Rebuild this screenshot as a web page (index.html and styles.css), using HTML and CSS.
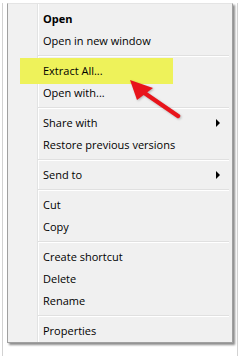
FILE: index.html
```html
<!DOCTYPE html>
<html>
  <head>
    <meta charset="UTF-8">
    <title>Context menu</title>
    <link rel="stylesheet" href="styles.css">
  </head>
  <body>
    <div class="frame">
      <div class="menu">
        <!-- annotation: highlight + arrow -->
        <div class="highlight"></div>
        <svg class="pointer" width="62" height="50" viewBox="0 0 62 50">
          <line x1="18" y1="17" x2="53" y2="41" stroke="#e8141b" stroke-width="4.5" stroke-linecap="round"/>
          <polygon points="5,5 28,13 12,25" fill="#e8141b"/>
        </svg>

        <div class="item bold">Open</div>
        <div class="item">Open in new window</div>
        <div class="sep"></div>
        <div class="item">Extract All...</div>
        <div class="item">Open with...</div>
        <div class="sep"></div>
        <div class="item sub">Share with</div>
        <div class="item">Restore previous versions</div>
        <div class="sep"></div>
        <div class="item sub">Send to</div>
        <div class="sep"></div>
        <div class="item">Cut</div>
        <div class="item">Copy</div>
        <div class="sep"></div>
        <div class="item">Create shortcut</div>
        <div class="item">Delete</div>
        <div class="item">Rename</div>
        <div class="sep"></div>
        <div class="item">Properties</div>
      </div>
    </div>
  </body>
</html>
```
FILE: styles.css
```css
/* reset */
html,body{margin:0;padding:0;background:#fff;}
body{font-family:'Open Sans','Noto Sans',sans-serif;font-size:11px;color:#000;}

/* screenshot frame */
.frame{margin:0 2px;height:354px;box-sizing:border-box;border:1px solid #d2d2d2;border-top:none;padding:0 0 0 4px;}

/* menu box with icon gutter */
.menu{position:relative;width:224px;margin-top:3px;border:1px solid #a0a0a0;border-top-color:#e4e4e4;padding:4px 0 0 0;
  background:linear-gradient(to right,#f1f1f1 0 29px,#e2e3e3 29px 30px,#fff 30px 31px,#f0f0f0 31px);
  box-shadow:2px 2px 2px rgba(0,0,0,.45);}
.item{position:relative;z-index:1;height:22px;line-height:22px;padding-left:35px;white-space:nowrap;}
.bold{font-weight:700;}
.sub::after{content:'';position:absolute;left:208px;top:7px;border-left:4px solid #000;border-top:4px solid transparent;border-bottom:4px solid transparent;}
.sep{height:0;margin:3px 3px 3px 30px;border-top:1px solid #e0e0e0;border-bottom:1px solid #fff;}

/* annotation layer */
.highlight{position:absolute;left:12px;top:54px;width:153px;height:26px;background:#eef25a;}
.pointer{position:absolute;left:117px;top:71px;z-index:2;filter:drop-shadow(1px 1px 1px rgba(0,0,0,.25));}
```
